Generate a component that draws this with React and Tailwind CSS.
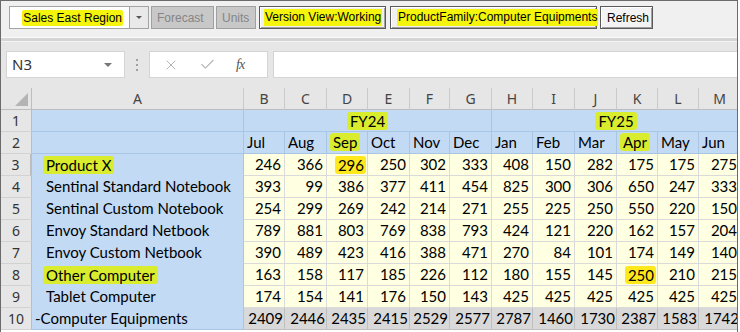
import React from 'react';
import { X, Check } from 'lucide-react';

const cols = ['A', 'B', 'C', 'D', 'E', 'F', 'G', 'H', 'I', 'J', 'K', 'L', 'M'];
const months = ['Jul', 'Aug', 'Sep', 'Oct', 'Nov', 'Dec', 'Jan', 'Feb', 'Mar', 'Apr', 'May', 'Jun'];

const rows = [
  { n: 3, name: 'Product X', mark: true, vals: [246, 366, 296, 250, 302, 333, 408, 150, 282, 175, 175, 275], gold: 2 },
  { n: 4, name: 'Sentinal Standard Notebook', vals: [393, 99, 386, 377, 411, 454, 825, 300, 306, 650, 247, 333] },
  { n: 5, name: 'Sentinal Custom Notebook', vals: [254, 299, 269, 242, 214, 271, 255, 225, 250, 550, 220, 150] },
  { n: 6, name: 'Envoy Standard Netbook', vals: [789, 881, 803, 769, 838, 793, 424, 121, 220, 162, 157, 204] },
  { n: 7, name: 'Envoy Custom Netbook', vals: [390, 489, 423, 416, 388, 471, 270, 84, 101, 174, 149, 140] },
  { n: 8, name: 'Other Computer', mark: true, vals: [163, 158, 117, 185, 226, 112, 180, 155, 145, 250, 210, 215], gold: 9 },
  { n: 9, name: 'Tablet Computer', vals: [174, 154, 141, 176, 150, 143, 425, 425, 425, 425, 425, 425] },
];

const totals = [2409, 2446, 2435, 2415, 2529, 2577, 2787, 1460, 1730, 2387, 1583, 1742];

const cell = 'flex items-center overflow-hidden whitespace-nowrap border-r border-b';
const rowHead = `${cell} justify-center bg-[#e6e6e6] border-r-[#bdbdbd] border-b-[#d2d2d2] text-[#333] font-['Noto_Sans',sans-serif] text-[14px]`;
const blue = 'bg-[#c2daf4] border-[#a9c5e4]';
const btn3d = 'border border-[#5a5a5a] shadow-[inset_1px_1px_0_#ffffff,inset_-1px_-1px_0_#a0a0a0]';

function Mark({ children, gold }) {
  return (
    <span className={`rounded-[3px] px-[3px] -mx-[3px] leading-[18px] ${gold ? 'bg-[#ffe91c]' : 'bg-[#d9ec2e]'}`}>
      {children}
    </span>
  );
}

function Toolbar() {
  return (
    <div className="h-[36px] bg-[#f0f0f0] flex items-start pt-[5px] pl-[8px] font-['Liberation_Sans',sans-serif] text-[12px] whitespace-nowrap">
      <div className="w-[121px] h-[23px] bg-white border border-[#a3a3a3] flex items-center justify-end pr-[6px]">
        <span className="bg-[#f4f40c] px-[1px] rounded-[2px] leading-[16px]">Sales East Region</span>
      </div>
      <div className="w-[19px] h-[23px] bg-[#e9e9e9] border border-l-0 border-[#a3a3a3] flex items-center justify-center">
        <div className="w-0 h-0 border-l-[3px] border-r-[3px] border-t-[3px] border-l-transparent border-r-transparent border-t-[#555]" />
      </div>
      <div className="ml-[2px] w-[63px] h-[23px] bg-[#c8c8c8] border border-[#a0a0a0] flex items-center pl-[5px] text-[#858585]">
        Forecast
      </div>
      <div className="ml-[2px] w-[40px] h-[23px] bg-[#c8c8c8] border border-[#a0a0a0] flex items-center pl-[5px] text-[#858585]">
        Units
      </div>
      <div className={`ml-[3px] w-[127px] h-[23px] ${btn3d} flex items-center pl-[4px]`}>
        <span className="bg-[#f4f40c] px-[1px] leading-[17px]">Version View:Working</span>
      </div>
      <div className={`ml-[4px] w-[207px] h-[23px] ${btn3d} flex items-center pl-[6px]`}>
        <span className="bg-[#f4f40c] px-[1px] leading-[17px]">ProductFamily:Computer Equipments</span>
      </div>
      <div className={`ml-[3px] w-[53px] h-[23px] bg-[#f3f3f3] ${btn3d} flex items-center pl-[6px]`}>
        Refresh
      </div>
    </div>
  );
}

function FormulaBar() {
  return (
    <div className="h-[46px] bg-[#e6e6e6] flex items-start pt-[9px] pl-[5px]">
      <div className="w-[119px] h-[27px] bg-white border border-[#d4d4d4] flex items-center justify-between pl-[5px] pr-[12px] font-['Noto_Sans',sans-serif] text-[15px] text-[#333]">
        N3
        <div className="w-0 h-0 border-l-[4px] border-r-[4px] border-t-[4px] border-l-transparent border-r-transparent border-t-[#777]" />
      </div>
      <div className="w-[24px] h-[27px] flex flex-col items-center justify-center gap-[3px]">
        <div className="w-[2px] h-[2px] bg-[#a0a0a0]" />
        <div className="w-[2px] h-[2px] bg-[#a0a0a0]" />
        <div className="w-[2px] h-[2px] bg-[#a0a0a0]" />
      </div>
      <div className="w-[119px] h-[27px] bg-white border border-[#d4d4d4] flex items-center pl-[13px] gap-[20px]">
        <X size={16} strokeWidth={1.5} color="#b3b3b3" />
        <Check size={17} strokeWidth={1.5} color="#b3b3b3" />
        <span className="font-['Liberation_Serif',serif] italic text-[14px] text-[#555] tracking-[-1px]">fx</span>
      </div>
      <div className="ml-[5px] flex-1 h-[27px] bg-white border border-[#d4d4d4] border-r-0" />
    </div>
  );
}

export default function App() {
  return (
    <div className="w-[740px] h-[332px] bg-white overflow-hidden">
      <div className="w-[738px] h-[332px] border-l border-t border-r border-[#6b6b6b] overflow-hidden flex flex-col">
        <Toolbar />
        <div className="h-[1px] bg-[#fafafa]" />
        <div className="h-[3px] bg-[#d5d5d5]" />
        <div className="h-[1px] bg-[#f4f4f4]" />
        <FormulaBar />
        <div className="grid grid-cols-[31px_212px_41px_42px_41px_42px_40px_42px_41px_42px_42px_41px_41px_42px] auto-rows-[22px] font-['Lato',sans-serif] text-[15px] text-black">
          {/* column letters */}
          <div className="relative bg-[#e6e6e6] border-r border-b border-[#bdbdbd]">
            <div className="absolute right-[3px] bottom-[3px] w-0 h-0 border-l-[13px] border-l-transparent border-b-[13px] border-b-[#b4b4b4]" />
          </div>
          {cols.map((c) => (
            <div key={c} className={`${cell} justify-center bg-[#e6e6e6] border-r-[#cacaca] border-b-[#bdbdbd] text-[#444] font-['Noto_Sans',sans-serif] text-[14px]`}>
              {c}
            </div>
          ))}

          {/* row 1 */}
          <div className={rowHead}>1</div>
          <div className={`${cell} ${blue}`} />
          <div className={`${cell} ${blue} col-span-6 justify-center`}>
            <Mark>FY24</Mark>
          </div>
          <div className={`${cell} ${blue} col-span-6 justify-center`}>
            <Mark>FY25</Mark>
          </div>

          {/* row 2 */}
          <div className={rowHead}>2</div>
          <div className={`${cell} ${blue}`} />
          {months.map((m) => (
            <div key={m} className={`${cell} ${blue} pl-[3px]`}>
              {m === 'Sep' || m === 'Apr' ? <span className="ml-[3px]"><Mark>{m}</Mark></span> : m}
            </div>
          ))}

          {/* data rows */}
          {rows.map((r) => (
            <React.Fragment key={r.n}>
              <div className={`${rowHead} ${r.n === 3 ? 'text-[#1e6b3c] border-r-2 border-r-[#217346]' : ''}`}>{r.n}</div>
              <div className={`${cell} bg-[#c2daf4] border-r-[#a9c5e4] border-b-[#c2daf4] pl-[14px]`}>
                {r.mark ? <Mark>{r.name}</Mark> : r.name}
              </div>
              {r.vals.map((v, i) => (
                <div key={i} className={`${cell} justify-end pr-[3px] bg-[#ffffe1] border-[#dadada]`}>
                  {r.gold === i ? <span className="bg-[#ffe91c] rounded-[3px] pl-[3px] leading-[18px] -mr-[2px] pr-[2px]">{v}</span> : v}
                </div>
              ))}
            </React.Fragment>
          ))}

          {/* totals */}
          <div className={rowHead}>10</div>
          <div className={`${cell} bg-[#c2daf4] border-r-[#a9c5e4] border-b-[#a9c5e4] pl-[3px]`}>-Computer Equipments</div>
          {totals.map((v, i) => (
            <div key={i} className={`${cell} justify-end pr-[1px] bg-[#d9d9d9] border-[#bfbfbf]`}>
              {v}
            </div>
          ))}
        </div>
      </div>
    </div>
  );
}
